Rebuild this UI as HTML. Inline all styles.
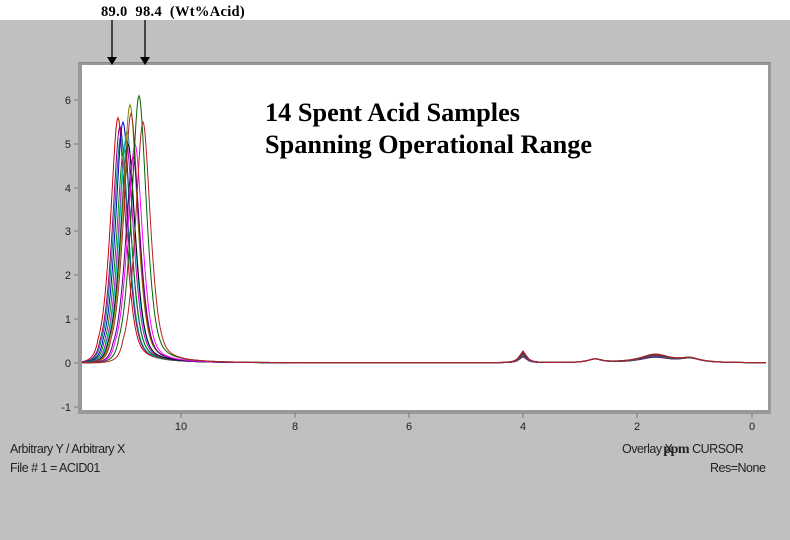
<!DOCTYPE html>
<html><head><style>
body{margin:0;width:790px;height:540px;background:#c0c0c0;position:relative;overflow:hidden;font-family:"Liberation Sans",sans-serif}
.t{position:absolute;font-size:12.5px;color:#222;letter-spacing:-0.5px}
</style></head><body>
<div style="position:absolute;left:0;top:0;width:790px;height:20px;background:#fff"></div>
<div style="position:absolute;left:101px;top:4px;font:bold 14.5px 'Liberation Serif',serif;letter-spacing:0.3px">89.0&nbsp; 98.4&nbsp; (Wt%Acid)</div>
<div style="position:absolute;left:78px;top:62px;width:693px;height:351px;background:#999;border-top:1px solid #888"></div>
<div style="position:absolute;left:82px;top:65px;width:686px;height:345px;background:#fff"></div>
<svg width="790" height="540" style="position:absolute;left:0;top:0" id="s">
<g stroke="#000" stroke-width="1.3"><line x1="112" y1="20" x2="112" y2="58"/><line x1="145" y1="20" x2="145" y2="58"/></g>
<polygon points="107,57 117,57 112,65" fill="#000"/><polygon points="140,57 150,57 145,65" fill="#000"/>
<g stroke="#777" stroke-width="1"><line x1="74" y1="100" x2="78" y2="100"/><line x1="74" y1="144" x2="78" y2="144"/><line x1="74" y1="188" x2="78" y2="188"/><line x1="74" y1="231" x2="78" y2="231"/><line x1="74" y1="275" x2="78" y2="275"/><line x1="74" y1="319" x2="78" y2="319"/><line x1="74" y1="363" x2="78" y2="363"/><line x1="74" y1="407" x2="78" y2="407"/>
<line x1="181" y1="413" x2="181" y2="418"/><line x1="295" y1="413" x2="295" y2="418"/><line x1="409" y1="413" x2="409" y2="418"/><line x1="523" y1="413" x2="523" y2="418"/><line x1="637" y1="413" x2="637" y2="418"/><line x1="752" y1="413" x2="752" y2="418"/></g>
<g font-family="Liberation Sans,sans-serif" font-size="11" fill="#222" text-anchor="end">
<text x="71" y="104">6</text><text x="71" y="148">5</text><text x="71" y="192">4</text><text x="71" y="235">3</text><text x="71" y="279">2</text><text x="71" y="323">1</text><text x="71" y="367">0</text><text x="71" y="411">-1</text></g>
<g font-family="Liberation Sans,sans-serif" font-size="11" fill="#222" text-anchor="middle">
<text x="181" y="430">10</text><text x="295" y="430">8</text><text x="409" y="430">6</text><text x="523" y="430">4</text><text x="637" y="430">2</text><text x="752" y="430">0</text></g>
<g id="c" fill="none" stroke-width="1"></g>
<text x="265" y="121" font-family="Liberation Serif,serif" font-weight="bold" font-size="26" textLength="255" lengthAdjust="spacingAndGlyphs">14 Spent Acid Samples</text>
<text x="265" y="153" font-family="Liberation Serif,serif" font-weight="bold" font-size="26" textLength="327" lengthAdjust="spacingAndGlyphs">Spanning Operational Range</text>
</svg>
<div class="t" style="left:10px;top:442px">Arbitrary Y / Arbitrary X</div>
<div class="t" style="left:10px;top:461px">File # 1 = ACID01</div>
<div class="t" style="left:622px;top:442px">Overlay X <b style="font-family:'Liberation Serif',serif;font-size:14px;margin-left:-12px">ppm</b> CURSOR</div>
<div class="t" style="left:710px;top:461px">Res=None</div>
<script>
var cols=["#c00","#800080","#008080","#00c","#080","#c0c","#0cc","#000","#808000","#a52a2a","#4b0082","#f0f","#006400","#b22222"];
var pk=[[118,5.6],[120,5.4],[121,5.2],[123,5.5],[124,4.9],[126,5.1],[127,5.3],[128,5.0],[130,5.9],[131,5.7],[133,4.7],[135,5.0],[139,6.1],[143,5.5]];
var g=document.getElementById('c'),h='';
for(var i=0;i<14;i++){var x0=pk[i][0],hh=pk[i][1],d='';
for(var x=82;x<=768;x+=(x<250?1:3)){var u=(x-x0)/9;var y=hh*(0.55/(1+u*u*1.3)+0.45*Math.exp(-u*u*0.6))*(x<x0-20?Math.exp((x-x0+20)/10):1);
y+=0.28/(1+Math.pow((x-523)/4,2))*(0.5+i/28)+0.08/(1+Math.pow((x-595)/8,2))+0.2/(1+Math.pow((x-655)/18,2))*(0.6+i/35)+0.09/(1+Math.pow((x-690)/12,2));
d+=(d?'L':'M')+x+','+(363-y*43.8).toFixed(1);}
h+='<path d="'+d+'" stroke="'+cols[i]+'"/>';}
g.innerHTML=h;
</script>
</body></html>
